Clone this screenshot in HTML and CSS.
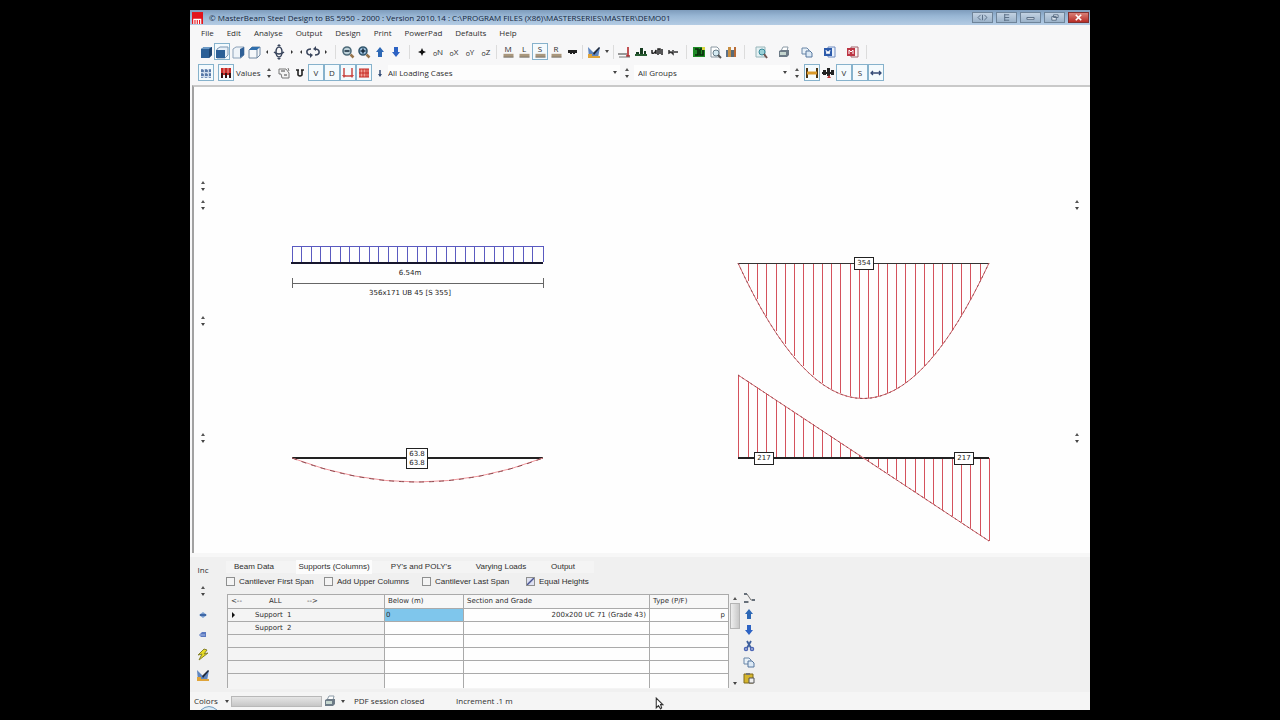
FILE: index.html
```html
<!DOCTYPE html>
<html lang="en">
<head>
<meta charset="utf-8">
<title>MasterBeam Steel Design</title>
<link rel="stylesheet" href="styles.css">
</head>
<body>
<svg class="defs" aria-hidden="true">
  <symbol id="cube" viewBox="0 0 16 16"><path d="M3 5l3-2h8v8l-3 3H3z" fill="#2b5f96"/><path d="M3 5l3-2h8l-3 2z" fill="#6d9ac6"/><path d="M11 5l3-2v8l-3 3z" fill="#1d4470"/></symbol>
  <symbol id="cube-front" viewBox="0 0 16 16"><path d="M3 5l3-2h8v8l-3 3H3z" fill="#e8f0f8" stroke="#7d97b3"/><path d="M2 6h9v8H2z" fill="#2b5f96"/></symbol>
  <symbol id="cube-side" viewBox="0 0 16 16"><path d="M3 5l3-2h8v8l-3 3H3z" fill="#eef3f8" stroke="#8ba1b8"/><path d="M10 5l4-2v8l-4 3z" fill="#2f5f96"/></symbol>
  <symbol id="cube-top" viewBox="0 0 16 16"><path d="M3 6l3-3h8v8l-3 3H3z" fill="#f4f7fa" stroke="#7088a2"/><path d="M3 6l3-3h8l-3 3z" fill="#2f6fae"/><path d="M11 6v8" stroke="#7088a2"/></symbol>
  <symbol id="rot-v" viewBox="0 0 16 16"><g fill="none" stroke="#39455c" stroke-width="1.5"><ellipse cx="8" cy="8" rx="3" ry="5"/><path d="M3 8q5 4 10 0"/></g><path d="M6 2h4l-2-2zM6 14h4l-2 2z" fill="#39455c"/></symbol>
  <symbol id="rot-h" viewBox="0 0 16 16"><path d="M6 5C0 5 1 11 6 11M10 11c6 0 5-6 0-6" fill="none" stroke="#39455c" stroke-width="1.6"/><path d="M5 9v5l3-3zM11 2v5L8 5z" fill="#39455c"/></symbol>
  <symbol id="zoom-out" viewBox="0 0 16 16"><circle cx="7" cy="7" r="4" fill="#bcd0d8" stroke="#4e6a79" stroke-width="1.600"/><path d="M4.500 7h5" stroke="#12283a" stroke-width="1.500"/><path d="M10.500 10.500l3 3" stroke="#97754c" stroke-width="2.500"/></symbol>
  <symbol id="zoom-in" viewBox="0 0 16 16"><circle cx="7" cy="7" r="4" fill="#9cbfdc" stroke="#31566d" stroke-width="1.600"/><path d="M4.500 7h5M7 4.500v5" stroke="#12283a" stroke-width="1.500"/><path d="M10.500 10.500l3 3" stroke="#97754c" stroke-width="2.500"/></symbol>
  <symbol id="up" viewBox="0 0 16 16"><path d="M8 3l4 5h-2v5H6V8H4z" fill="#2d68b5"/></symbol>
  <symbol id="down" viewBox="0 0 16 16"><path d="M8 13l4-5h-2V3H6v5H4z" fill="#2d63c4"/></symbol>
  <symbol id="star" viewBox="0 0 16 16"><path d="M8 4l1.200 2.800L12 8 9.200 9.200 8 12 6.800 9.200 4 8l2.800-1.200z" fill="#111"/></symbol>
  <symbol id="block" viewBox="0 0 16 6"><path d="M2 1h12v4H2z" fill="#a9977d"/><path d="M2 5h12" stroke="#6c675f"/></symbol>
  <symbol id="dark" viewBox="0 0 16 16"><path d="M4 6h9v3h-2v1H9V9H8v1H6V9H4z" fill="#202020"/></symbol>
  <symbol id="chart" viewBox="0 0 16 16"><path d="M2 3l6 6 6-6-2 11H3z" fill="#5f86bf"/><path d="M7 9l6-6 1 1-6 7z" fill="#202a3b"/><path d="M2 10h4v2h8v2H2z" fill="#dfa43a"/></symbol>
  <symbol id="load" viewBox="0 0 16 16"><path d="M1 10h9" stroke="#777" stroke-width="1.500"/><path d="M11 3v10M9 12h4" stroke="#b3292b" stroke-width="1.600"/><path d="M2 13h11" stroke="#777"/></symbol>
  <symbol id="bars" viewBox="0 0 16 16"><path d="M3 8h3v4H3zM7 4h3v8H7zM11 7h2v5h-2z" fill="#163c20"/><path d="M2 10h12v2H2z" fill="#265c30"/></symbol>
  <symbol id="marks" viewBox="0 0 16 16"><path d="M3 6v3q3 1 4-3v4M9 11V5h2v5M13 5v6" stroke="#202020" stroke-width="1.500" fill="none"/></symbol>
  <symbol id="minus" viewBox="0 0 16 16"><path d="M4 6v3l2-1 2 2V6M9 8h4" stroke="#333" stroke-width="1.500" fill="none"/></symbol>
  <symbol id="green" viewBox="0 0 16 16"><path d="M2 3h12v10H2z" fill="#1f8c27"/><path d="M4 5h3v6H4m5-6h3v6H9V5" fill="none" stroke="#0b2b0d" stroke-width="1.600"/><path d="M11 3h3v3h-3z" fill="#d8d640"/></symbol>
  <symbol id="page" viewBox="0 0 16 16"><path d="M4 3h6l2 2v8H4z" fill="#fff" stroke="#8a98a2"/><circle cx="9" cy="9" r="3" fill="#d5eaf2" stroke="#647b88"/><path d="M11 11l3 3" stroke="#555" stroke-width="2"/></symbol>
  <symbol id="books" viewBox="0 0 16 16"><path d="M3 6h2v7H3z" fill="#5d7188"/><path d="M5 3h3v10H5z" fill="#c78e42"/><path d="M8 6h3v7H8z" fill="#596b77"/><path d="M11 3h2v10h-2z" fill="#b96a35"/></symbol>
  <symbol id="preview" viewBox="0 0 16 16"><path d="M3 3h9v10H3z" fill="#e5f1f3" stroke="#97b5ba"/><circle cx="9" cy="8" r="3" fill="#9bd1d7" stroke="#37899a"/><path d="M11 10l3 4" stroke="#735550" stroke-width="2"/></symbol>
  <symbol id="printer" viewBox="0 0 16 16"><path d="M5 7l2-4h5l-1 4z" fill="#fff" stroke="#8c9ba7"/><path d="M3 7l2-1h8v5l-2 2H3z" fill="#6d7b87"/><path d="M4 8h6v3H4z" fill="#c5d6cf"/></symbol>
  <symbol id="copy" viewBox="0 0 16 16"><path d="M3 4h5l2 2v4H3z" fill="#e9f1f8" stroke="#6b87a8"/><path d="M7 7h4l2 2v4H7z" fill="#dce9f5" stroke="#56779e"/></symbol>
  <symbol id="word" viewBox="0 0 16 16"><path d="M6 3h7v10H6z" fill="#edf3fb" stroke="#6d8ac0"/><path d="M2 4h8v8H2z" fill="#2d5bab"/><path d="M4 6l1 4 1-3 1 3 1-4" stroke="#fff" fill="none"/></symbol>
  <symbol id="pdf" viewBox="0 0 16 16"><path d="M6 3h7v10H6z" fill="#faf0f0" stroke="#a1656d"/><path d="M2 4h8v8H2z" fill="#bc3544"/><path d="M4 10V6l2 2 2-2v4" stroke="#fff" fill="none"/></symbol>
  <symbol id="grid" viewBox="0 0 16 16"><path d="M3 4h10v9H3z" fill="#cbd9eb"/><path d="M4 4v9M8 4v9M12 4v9M3 6h10M3 10h10" stroke="#4c6fa0" stroke-width="1.300" stroke-dasharray="3 1"/></symbol>
  <symbol id="red-load" viewBox="0 0 16 16"><path d="M3 3h10v7H3z" fill="#c62927"/><path d="M4 8v5m4-5v5m4-5v5" stroke="#351414" stroke-width="2"/><path d="M6 3v5m4-5v5" stroke="#f2a7a0"/></symbol>
  <symbol id="notes" viewBox="0 0 16 16"><path d="M3 4h7l3 4v5H6L5 9H3z" fill="#f4f4f4" stroke="#777"/><path d="M5 6h4m-1 4h3" stroke="#444"/><path d="M12 3l1 3" stroke="#777"/></symbol>
  <symbol id="clamp" viewBox="0 0 16 16"><path d="M6 5v5q2 2 4 0V5M4 5h3m2 0h3" fill="none" stroke="#222" stroke-width="1.600"/></symbol>
  <symbol id="supports" viewBox="0 0 16 16"><path d="M4 3v8m8-8v8M4 11h8" stroke="#c94945" stroke-width="1.500"/><path d="M2 10h4l-2 3zM10 10h4l-2 3z" fill="#c94945"/></symbol>
  <symbol id="udl" viewBox="0 0 16 16"><path d="M3 4h10v8H3z" fill="#f2a197"/><path d="M4 4v8m3-8v8m3-8v8m2-8v8M3 8h10M3 4h10M3 12h10" stroke="#c52b24"/></symbol>
  <symbol id="small-down" viewBox="0 0 16 16"><path d="M8 5v6" stroke="#344d76" stroke-width="1.500"/><path d="M6 9h4l-2 3z" fill="#344d76"/></symbol>
  <symbol id="beam" viewBox="0 0 16 16"><path d="M3 3v10M13 3v10" stroke="#4b3514" stroke-width="2"/><path d="M3 8h10" stroke="#d9992a" stroke-width="3"/></symbol>
  <symbol id="crossbeam" viewBox="0 0 16 16"><path d="M3 5h3v5H3zm4-2h3v8H7zm4 2h3v5h-3zM2 7h12v2H2z" fill="#222"/><path d="M7 13h4l-2-3z" fill="#bd3232"/></symbol>
  <symbol id="span" viewBox="0 0 16 16"><path d="M3 8h10M5 6L3 8l2 2m6-4l2 2-2 2" fill="none" stroke="#354b76" stroke-width="1.300"/></symbol>
  <symbol id="diamond" viewBox="0 0 16 16"><path d="M8 5l4 3-4 3-4-3z" fill="#7b9fd0"/><path d="M5 8h6" stroke="#3f68a6" stroke-width="2"/></symbol>
  <symbol id="blue-block" viewBox="0 0 16 16"><path d="M4 8l3-3h4v5H6z" fill="#5b79c0"/><path d="M5 8h5" stroke="#a8bce5"/></symbol>
  <symbol id="bolt" viewBox="0 0 16 16"><path d="M9 2L3 8l4-1-3 6 9-7-4 1 3-4z" fill="#e7dc25" stroke="#87822c"/></symbol>
  <symbol id="tree" viewBox="0 0 16 16"><path d="M4 4h2l4 6h3M3 12h5" fill="none" stroke="#777"/><path d="M3 3h3v2H3zm8 6h3v2h-3zm-8 2h4v2H3z" fill="#67707a"/></symbol>
  <symbol id="cut" viewBox="0 0 16 16"><path d="M10 3L6 10M6 3l4 7" stroke="#3d5f9c" stroke-width="1.800"/><circle cx="5" cy="11" r="1.500" fill="none" stroke="#4b65b5" stroke-width="1.500"/><circle cx="11" cy="11" r="1.500" fill="none" stroke="#4b65b5" stroke-width="1.500"/></symbol>
  <symbol id="paste" viewBox="0 0 16 16"><path d="M3 4h9v9H3z" fill="#d5b52e" stroke="#806a1b"/><path d="M5 3h4v2H5z" fill="#777"/><path d="M8 8h5v5H8z" fill="#eee" stroke="#555"/></symbol>
</svg>

<div class="window">
  <header class="titlebar">
    <svg class="logo" viewBox="0 0 12 13"><path d="M0 0h12v13H0z" fill="#e3131b"/><path d="M2 13V8h2.500v5M4.500 8H7v5M7 8h2.500v5" fill="none" stroke="#fff" stroke-width="1.300"/></svg>
    <h1 class="title">© MasterBeam Steel Design to BS 5950 - 2000 : Version 2010.14 : C:\PROGRAM FILES (X86)\MASTERSERIES\MASTER\DEMO01</h1>
    <div class="winbuttons">
      <button class="win" aria-label="Split"><svg viewBox="0 0 20 10"><path d="M8 2L5 5l3 3m4-6l3 3-3 3M10 2v6" fill="none" stroke="#53687f"/></svg></button>
      <button class="win" aria-label="Dock"><svg viewBox="0 0 20 10"><path d="M8 1v8M8 2h5M8 5h5M8 8h5" fill="none" stroke="#53687f"/></svg></button>
      <button class="win" aria-label="Minimise"><svg viewBox="0 0 20 10"><path d="M6 5h8v2H6z" fill="#dce6ef" stroke="#53687f"/></svg></button>
      <button class="win" aria-label="Restore"><svg viewBox="0 0 20 10"><path d="M9 2h5v3H9zM7 4h5v4H7z" fill="#dce6ef" stroke="#53687f"/></svg></button>
      <button class="win close" aria-label="Close"><svg viewBox="0 0 20 10"><path d="M7 2l6 6m0-6L7 8" stroke="#fff" stroke-width="1.800"/></svg></button>
    </div>
  </header>

  <nav class="menu">
    <button>File</button><button>Edit</button><button>Analyse</button><button>Output</button><button>Design</button><button>Print</button><button>PowerPad</button><button>Defaults</button><button>Help</button>
  </nav>

  <div class="toolbar" role="toolbar" aria-label="View">
    <button class="tool" aria-label="Solid"><svg><use href="#cube"/></svg></button>
    <button class="tool on" aria-label="Front"><svg><use href="#cube-front"/></svg></button>
    <button class="tool" aria-label="Side"><svg><use href="#cube-side"/></svg></button>
    <button class="tool" aria-label="Top"><svg><use href="#cube-top"/></svg></button>
    <button class="nudge" aria-label="Tilt back"><i class="left"></i></button>
    <button class="tool" aria-label="Tilt"><svg><use href="#rot-v"/></svg></button>
    <button class="nudge" aria-label="Tilt forward"><i class="right"></i></button>
    <button class="nudge" aria-label="Turn left"><i class="left"></i></button>
    <button class="tool" aria-label="Turn"><svg><use href="#rot-h"/></svg></button>
    <button class="nudge" aria-label="Turn right"><i class="right"></i></button>
    <span class="sep wide"></span>
    <button class="tool" aria-label="Zoom out"><svg><use href="#zoom-out"/></svg></button>
    <button class="tool" aria-label="Zoom in"><svg><use href="#zoom-in"/></svg></button>
    <button class="tool" aria-label="Up"><svg><use href="#up"/></svg></button>
    <button class="tool" aria-label="Down"><svg><use href="#down"/></svg></button>
    <span class="sep wide"></span>
    <button class="tool" aria-label="Node"><svg><use href="#star"/></svg></button>
    <button class="tool axis"><small>o</small>N</button>
    <button class="tool axis"><small>o</small>X</button>
    <button class="tool axis"><small>o</small>Y</button>
    <button class="tool axis"><small>o</small>Z</button>
    <span class="sep"></span>
    <button class="tool stack">M<svg><use href="#block"/></svg></button>
    <button class="tool stack">L<svg><use href="#block"/></svg></button>
    <button class="tool stack on">S<svg><use href="#block"/></svg></button>
    <button class="tool stack">R<svg><use href="#block"/></svg></button>
    <button class="tool" aria-label="Members"><svg><use href="#dark"/></svg></button>
    <span class="sep"></span>
    <button class="tool" aria-label="Chart"><svg><use href="#chart"/></svg></button>
    <button class="nudge" aria-label="Chart options"><i class="caret"></i></button>
    <span class="sep"></span>
    <button class="tool" aria-label="Load"><svg><use href="#load"/></svg></button>
    <button class="tool" aria-label="Bars"><svg><use href="#bars"/></svg></button>
    <button class="tool" aria-label="Marks"><svg><use href="#marks"/></svg></button>
    <button class="tool" aria-label="Remove"><svg><use href="#minus"/></svg></button>
    <span class="sep wide"></span>
    <button class="tool" aria-label="3D"><svg><use href="#green"/></svg></button>
    <button class="tool" aria-label="Find"><svg><use href="#page"/></svg></button>
    <button class="tool" aria-label="Library"><svg><use href="#books"/></svg></button>
    <span class="sep wide"></span>
    <button class="tool roomy" aria-label="Preview"><svg><use href="#preview"/></svg></button>
    <button class="tool roomy" aria-label="Print"><svg><use href="#printer"/></svg></button>
    <button class="tool roomy" aria-label="Copy"><svg><use href="#copy"/></svg></button>
    <button class="tool roomy" aria-label="Word"><svg><use href="#word"/></svg></button>
    <button class="tool roomy" aria-label="PDF"><svg><use href="#pdf"/></svg></button>
    <span class="sep"></span>
  </div>

  <div class="toolbar" role="toolbar" aria-label="Loading">
    <button class="tool on" aria-label="Grid"><svg><use href="#grid"/></svg></button>
    <span class="space"></span>
    <button class="tool on" aria-label="Loads"><svg><use href="#red-load"/></svg></button>
    <span class="values">Values</span>
    <button class="spin" aria-label="Value size"><i class="upward"></i><i class="caret"></i></button>
    <button class="tool" aria-label="Notes"><svg><use href="#notes"/></svg></button>
    <button class="tool" aria-label="Clamp"><svg><use href="#clamp"/></svg></button>
    <button class="tool on">V</button>
    <button class="tool on">D</button>
    <button class="tool on" aria-label="Reactions"><svg><use href="#supports"/></svg></button>
    <button class="tool on" aria-label="Distributed"><svg><use href="#udl"/></svg></button>
    <button class="tool" aria-label="Case"><svg><use href="#small-down"/></svg></button>
    <span class="pick cases"><select aria-label="Loading case"><option>All Loading Cases</option></select><i class="caret"></i></span>
    <button class="spin" aria-label="Next case"><i class="upward"></i><i class="caret"></i></button>
    <span class="pick groups"><select aria-label="Group"><option>All Groups</option></select><i class="caret"></i></span>
    <button class="spin" aria-label="Next group"><i class="upward"></i><i class="caret"></i></button>
    <button class="tool on" aria-label="Beam"><svg><use href="#beam"/></svg></button>
    <button class="tool" aria-label="Cross beam"><svg><use href="#crossbeam"/></svg></button>
    <button class="tool on">V</button>
    <button class="tool on">S</button>
    <button class="tool on" aria-label="Span"><svg><use href="#span"/></svg></button>
  </div>

  <main class="canvas">
    <svg class="drawing" viewBox="194 87 896 466" role="img" aria-label="Beam diagrams">
      <g fill="none" shape-rendering="crispEdges">
        <path stroke="#5a5ac0" d="M292 246V262M301 246V262M311 246V262M320 246V262M330 246V262M340 246V262M349 246V262M359 246V262M369 246V262M378 246V262M388 246V262M397 246V262M407 246V262M417 246V262M426 246V262M436 246V262M446 246V262M455 246V262M465 246V262M474 246V262M484 246V262M494 246V262M503 246V262M513 246V262M523 246V262M532 246V262M543 246V262M292 246H543"/>
        <path stroke="#16162c" stroke-width="2" d="M291 263H543"/>
        <path stroke="#666" d="M292 283H543M292 278V288M543 278V288"/>
        <path stroke="#d4525c" d="M748 263V281M757 263V299M766 263V316M776 263V331M785 263V344M794 263V356M803 263V366M813 263V375M822 263V383M831 263V389M840 263V393M850 263V396M859 263V398M868 263V398M878 263V396M887 263V393M896 263V389M905 263V383M915 263V375M924 263V366M933 263V356M942 263V344M952 263V331M961 263V316M970 263V299M980 263V281"/>
        <path stroke="#d4525c" d="M738 375V458M748 381V458M757 387V458M766 393V458M776 400V458M785 406V458M794 412V458M803 418V458M813 424V458M822 430V458M831 436V458M840 443V458M850 449V458M859 455V458M868 458V461M878 458V467M887 458V473M896 458V479M905 458V486M915 458V492M924 458V498M933 458V504M942 458V510M952 458V516M961 458V522M970 458V529M980 458V535M989 458V541"/>
        <path stroke="#333" d="M738 263H989"/>
        <path stroke="#222" stroke-width="2" d="M738 458H989M292 458H543"/>
      </g>
      <g fill="none">
        <path stroke="#d86a70" d="M738 263Q863 534 989 263M738 375L989 541"/>
        <path stroke="#8d4850" stroke-dasharray="2 3" d="M738 263Q863 534 989 263M738 375L989 541"/>
        <path stroke="#f0969b" d="M292 458Q417 506 543 458"/>
        <path stroke="#8c4a50" stroke-dasharray="5 5" d="M292 458Q417 506 543 458"/>
      </g>
      <g fill="#fff" stroke="#222" shape-rendering="crispEdges">
        <path d="M854 257H873V269H854ZM754 452H773V464H754ZM954 452H973V464H954ZM406 448H427V468H406Z"/>
      </g>
      <g class="note">
        <text x="410" y="275">6.54m</text>
        <text x="410" y="295">356x171 UB 45 [S 355]</text>
        <text x="864" y="265">354</text>
        <text x="764" y="460">217</text>
        <text x="964" y="460">217</text>
        <text x="417" y="456">63.8</text>
        <text x="417" y="465">63.8</text>
      </g>
    </svg>
    <button class="spin pin west row1" aria-label="Load scale"><i class="upward"></i><i class="caret"></i></button>
    <button class="spin pin west row2" aria-label="Load size"><i class="upward"></i><i class="caret"></i></button>
    <button class="spin pin west row3" aria-label="Text size"><i class="upward"></i><i class="caret"></i></button>
    <button class="spin pin west row4" aria-label="Deflection scale"><i class="upward"></i><i class="caret"></i></button>
    <button class="spin pin east row2" aria-label="Moment scale"><i class="upward"></i><i class="caret"></i></button>
    <button class="spin pin east row4" aria-label="Shear scale"><i class="upward"></i><i class="caret"></i></button>
  </main>

  <section class="panel">
    <aside class="side">
      <span>Inc</span>
      <button class="spin" aria-label="Increment"><i class="upward"></i><i class="caret"></i></button>
      <button class="tool" aria-label="Insert"><svg><use href="#diamond"/></svg></button>
      <button class="tool" aria-label="Delete"><svg><use href="#blue-block"/></svg></button>
      <button class="tool" aria-label="Analyse"><svg><use href="#bolt"/></svg></button>
      <button class="tool" aria-label="Results"><svg><use href="#chart"/></svg></button>
    </aside>
    <div class="editor">
      <div class="tabs" role="tablist">
        <button role="tab">Beam Data</button>
        <button role="tab" aria-selected="true">Supports (Columns)</button>
        <button role="tab">PY's and POLY's</button>
        <button role="tab">Varying Loads</button>
        <button role="tab">Output</button>
      </div>
      <div class="checks">
        <label><input type="checkbox">Cantilever First Span</label>
        <label><input type="checkbox">Add Upper Columns</label>
        <label><input type="checkbox">Cantilever Last Span</label>
        <label><input type="checkbox" checked>Equal Heights</label>
      </div>
      <div class="sheet">
        <table>
          <colgroup><col class="c-name"><col class="c-below"><col class="c-section"><col class="c-type"></colgroup>
          <thead><tr><th><span class="all"><span>&lt;--</span><span>ALL</span><span>--&gt;</span></span></th><th>Below (m)</th><th>Section and Grade</th><th>Type (P/F)</th></tr></thead>
          <tbody>
            <tr><td class="name current">Support &nbsp;1</td><td class="edit"><input aria-label="Below (m)" value="0"></td><td class="num">200x200 UC 71 (Grade 43)</td><td class="num">p</td></tr>
            <tr><td class="name">Support &nbsp;2</td><td></td><td></td><td></td></tr>
            <tr><td></td><td></td><td></td><td></td></tr>
            <tr><td></td><td></td><td></td><td></td></tr>
            <tr><td></td><td></td><td></td><td></td></tr>
            <tr><td></td><td></td><td></td><td></td></tr>
          </tbody>
        </table>
        <div class="scroll"><i class="upward"></i><span class="thumb"></span><i class="caret"></i></div>
        <div class="edits">
          <button class="tool" aria-label="Tree"><svg><use href="#tree"/></svg></button>
          <button class="tool" aria-label="Move up"><svg><use href="#up"/></svg></button>
          <button class="tool" aria-label="Move down"><svg><use href="#down"/></svg></button>
          <button class="tool" aria-label="Cut"><svg><use href="#cut"/></svg></button>
          <button class="tool" aria-label="Copy"><svg><use href="#copy"/></svg></button>
          <button class="tool" aria-label="Paste"><svg><use href="#paste"/></svg></button>
        </div>
      </div>
    </div>
  </section>

  <footer class="status">
    <button class="colors">Colors<i class="caret"></i></button>
    <span class="bar"></span>
    <button class="tool" aria-label="Print"><svg><use href="#printer"/></svg></button>
    <button class="nudge" aria-label="Print options"><i class="caret"></i></button>
    <span class="session">PDF session closed</span>
    <span>Increment .1 m</span>
  </footer>
  <svg class="orb" viewBox="0 0 18 5"><path d="M1 5Q9-2 17 5" fill="#dceaf4" stroke="#6f9cc0"/></svg>
  <svg class="cursor" viewBox="0 0 8 12"><path d="M1 1v9l2-2 2 3 1-1-1-3h2z" fill="#fff" stroke="#333"/></svg>
</div>
</body>
</html>
```
FILE: styles.css
```css
* { box-sizing: border-box; }
body {
  margin: 0;
  min-height: 100vh;
  padding: 10px 190px;
  display: flex;
  background: #000;
  color: #2e2e2e;
  font: 8px/12px "Open Sans", "Noto Sans", sans-serif;
}
button, input, select { font: inherit; color: inherit; margin: 0; }
button { border: 0; padding: 0; background: none; white-space: nowrap; }
.defs { position: absolute; width: 0; height: 0; }
.window {
  position: relative;
  flex: 1;
  min-width: 0;
  display: flex;
  flex-direction: column;
  background: #f7f7f8;
}

.titlebar {
  display: flex;
  align-items: center;
  height: 15px;
  padding: 0 1px 0 2px;
  background: linear-gradient(#7e9cbc, #98b6d4 40%, #b4cce4);
}
.logo { width: 11px; height: 12px; flex: none; }
.title { flex: 1; margin: 0 0 0 6px; font-size: 8px; font-weight: 400; line-height: 12px; color: #14263c; white-space: nowrap; }
.winbuttons { display: flex; gap: 3px; }
.win { display: flex; width: 21px; height: 11px; border: 1px solid #6f8499; background: linear-gradient(#c2d2e2, #9cb3ca); }
.win svg { width: 100%; height: 100%; }
.close { background: linear-gradient(#d98078, #b82c26); border-color: #803030; }

.menu { display: flex; gap: 13px; height: 16px; padding: 0 11px; align-items: center; }

.toolbar { display: flex; align-items: center; height: 21px; padding: 0 8px; }
.tool { display: flex; flex: none; align-items: center; justify-content: center; width: 16px; height: 17px; }
.tool svg { flex: none; width: 16px; height: 16px; }
.tool.on { border: 1px solid #86b2cc; background: #f4fafd; }
.roomy { width: 23px; }
.axis small { font-size: 7px; padding-top: 4px; }
.stack { flex-direction: column; line-height: 8px; }
.tool.stack svg { width: 15px; height: 5px; }
.nudge { display: flex; flex: none; justify-content: center; width: 9px; }
.sep { flex: none; width: 1px; height: 14px; margin: 0 3px 0 2px; background: #dcdcdc; }
.sep.wide { margin: 0 4px 0 5px; }
.space { width: 4px; }
.values { width: 28px; padding-left: 2px; }
.spin { display: flex; flex: none; flex-direction: column; align-items: center; justify-content: center; gap: 4px; width: 14px; height: 14px; }
.left, .right, .upward, .caret { width: 0; height: 0; border: 2px solid transparent; }
.left { border-right-color: #333; border-left: 0; }
.right { border-left-color: #333; border-right: 0; }
.upward { border-bottom: 3px solid #555; border-top: 0; }
.caret { border-top: 3px solid #444; border-bottom: 0; }
.pick { position: relative; height: 15px; background: #fdfdfd; }
.pick select { appearance: none; width: 100%; height: 100%; border: 0; padding: 0; background: none; }
.pick .caret { position: absolute; right: 3px; top: 6px; pointer-events: none; }
.cases { width: 232px; }
.groups { width: 156px; padding-left: 4px; }

.canvas {
  position: relative;
  flex: 1;
  margin: 2px 0 0 2px;
  border-top: 2px solid #c9c9c9;
  border-left: 2px solid #a2a2a2;
  background: #fefefe;
}
.drawing { display: block; width: 100%; height: 100%; }
.note { font: 7px "DejaVu Sans", sans-serif; fill: #222; text-anchor: middle; }
.pin { position: absolute; margin-top: -1px; }
.west { left: 2px; }
.east { right: 6px; }
.row1 { top: 20%; }
.row2 { top: 24%; }
.row3 { top: 49%; }
.row4 { top: 74%; }

.panel { display: flex; height: 139px; background: #f0f0f0; border-top: 4px solid #f7f7f7; }
.side { display: flex; flex-direction: column; align-items: center; width: 26px; padding-top: 7px; gap: 3px; }
.side .spin { height: 24px; }
.editor { flex: 1; padding: 3px 0 0 10px; min-width: 0; }
.tabs, .checks { font-family: "Liberation Sans", Arial, sans-serif; }
.tabs { display: flex; align-items: center; height: 14px; }
.tabs button { height: 12px; padding: 0 8px; background: #f4f4f4; }
.tabs button:first-child { width: 70px; text-align: left; }
.tabs button:nth-child(2) { width: 76px; height: 14px; padding: 0; background: #fcfcfc; }
.tabs button:nth-child(3) { width: 98px; }
.tabs button:nth-child(4) { width: 62px; padding: 0; }
.tabs button:nth-child(5) { width: 62px; }
.checks { display: flex; height: 15px; align-items: center; }
.checks label { display: flex; align-items: center; gap: 4px; width: 98px; white-space: nowrap; }
.checks input { appearance: none; width: 9px; height: 9px; margin: 0; border: 1px solid #8e8f8f; background: #f4f4f4; }
.checks input:checked { background: linear-gradient(135deg, #dfe2f2 35%, #4a5591 50%, #dfe2f2 65%); }
.checks label:nth-child(3) { width: 104px; }

.sheet { display: flex; align-items: flex-start; padding: 5px 0 0 1px; }
table { width: 501px; table-layout: fixed; border-collapse: collapse; border-top: 1px solid #b5b5b5; font: 7px/9px "DejaVu Sans", sans-serif; background: #fefefe; }
.c-name { width: 157px; }
.c-below { width: 79px; }
.c-section { width: 186px; }
.c-type { width: 79px; }
th, td { height: 13px; padding: 0 3px; border: 1px solid #aaa; text-align: left; font-weight: 400; white-space: nowrap; }
th { height: 14px; background: #f7f7f7; }
th:first-child, td:first-child { background: #f4f4f4; }
tr:last-child td { height: 15px; border-bottom-color: #f4f4f4; }
.all { display: grid; grid-template-columns: 38px 38px 1fr; }
td.name { position: relative; padding-left: 27px; }
.current::before { content: ""; position: absolute; left: 4px; top: 3px; border: 3px solid transparent; border-left-color: #111; border-right: 0; }
td.edit { padding: 0; background: #7fc6ec; }
.edit input { display: block; width: 100%; height: 11px; border: 0; padding: 0 1px; background: none; }
td.num { text-align: right; }
.scroll { display: flex; flex-direction: column; align-items: center; width: 12px; height: 94px; padding: 3px 0; background: #f1f1f1; }
.thumb { width: 10px; height: 26px; margin: 3px 0 auto; border: 1px solid #b5b5b5; background: linear-gradient(90deg, #eee, #c8c8c8); }
.edits { display: flex; flex-direction: column; margin-top: -4px; }
.edits .tool { height: 16px; }

.status { display: flex; align-items: center; height: 18px; padding-left: 4px; background: #f5f5f5; }
.colors { display: flex; align-items: center; justify-content: space-between; width: 36px; padding-right: 1px; }
.bar { width: 91px; height: 11px; margin-left: 1px; border: 1px solid #b8b8b8; background: linear-gradient(#e6e6e6, #c6c6c6); }
.session { width: 102px; margin-left: 7px; }
.orb { position: absolute; left: 10px; bottom: 0; width: 18px; height: 5px; }
.cursor { position: absolute; left: 465px; bottom: 0; width: 9px; height: 13px; }
```
